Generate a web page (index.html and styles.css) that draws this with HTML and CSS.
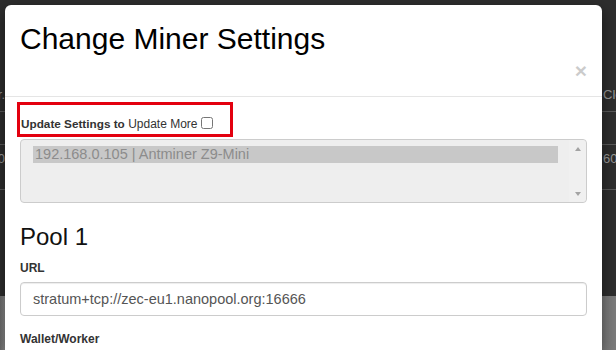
FILE: index.html
```html
<!DOCTYPE html>
<html lang="en">
<head>
    <meta charset="UTF-8">
    <meta name="viewport" content="width=device-width, initial-scale=1.0">
    <title>Change Miner Settings</title>
    <link rel="stylesheet" href="styles.css">
</head>
<body>
    <!-- the miners table behind the dialog -->
    <div class="page">
        <div class="page-row page-head">
            <span class="cell-left">Miner.</span>
            <span class="cell-right">Clear</span>
        </div>
        <div class="page-row page-line"></div>
        <div class="page-row page-data">
            <span class="cell-left">0</span>
            <span class="cell-right">60</span>
        </div>
        <div class="page-row page-rest"></div>
        <div class="page-foot"></div>
    </div>

    <div class="modal">
        <div class="modal-header">
            <h2 class="modal-title">Change Miner Settings</h2>
            <span class="close">&times;</span>
        </div>
        <div class="modal-body">
            <div class="highlight">
                <label class="update-label"><b>Update Settings to</b> <span class="update-more">Update More</span> <input type="checkbox" class="update-check"></label>
            </div>

            <div class="listbox">
                <div class="listbox-options">
                    <div class="listbox-option selected">192.168.0.105 | Antminer Z9-Mini</div>
                </div>
                <div class="listbox-scroll">
                    <span class="arrow-up"></span>
                    <span class="arrow-down"></span>
                </div>
            </div>

            <h3 class="pool-title">Pool 1</h3>
            <div class="form-group">
                <label class="field-label">URL</label>
                <input type="text" class="form-control" value="stratum+tcp://zec-eu1.nanopool.org:16666">
            </div>
            <div class="form-group">
                <label class="field-label">Wallet/Worker</label>
            </div>
        </div>
    </div>
</body>
</html>
```

FILE: styles.css
```css
body {
    font-family: "Liberation Sans", Arial, sans-serif;
    margin: 0;
    height: 350px;
    overflow: hidden;
    background-color: #2e2e2e;
    color: #333;
}
.page {
    display: flex;
    flex-direction: column;
    height: 350px;
}
.page-row {
    display: flex;
    justify-content: space-between;
    border-bottom: 1px solid #5a5a5a;
    color: #9a9a9a;
    font-size: 13px;
}
.page-head {
    height: 111px;
    align-items: flex-end;
}
.page-head span {
    margin-bottom: 9px;
}
.page-line {
    height: 32px;
}
.page-data {
    height: 44px;
    align-items: flex-start;
}
.page-data span {
    margin-top: 6px;
}
.page-rest {
    height: 106px;
    border-bottom: none;
}
.page-foot {
    flex: 1;
    background: linear-gradient(to right, #6c6c6c, #8a8a8a 4px, #7c7c7c);
}
.cell-left {
    width: 5px;
    display: flex;
    justify-content: flex-end;
    overflow: hidden;
    white-space: nowrap;
}
.cell-right {
    width: 13px;
    overflow: hidden;
    white-space: nowrap;
}
.modal {
    position: absolute;
    top: 5px;
    left: 5px;
    width: 597px;
    height: 345px;
    overflow: hidden;
    background-color: #fff;
    border-radius: 6px 6px 0 0;
    box-shadow: 0 5px 15px rgba(0,0,0,0.5);
}
.modal-header {
    display: flex;
    justify-content: space-between;
    height: 92px;
    box-sizing: border-box;
    padding: 17px 15px 0 15px;
    border-bottom: 1px solid #e5e5e5;
}
.modal-title {
    margin: 0;
    font-size: 30px;
    line-height: 34px;
    font-weight: normal;
    color: #000;
}
.close {
    margin-top: 38px;
    font-size: 21px;
    line-height: 21px;
    font-weight: bold;
    color: #000;
    opacity: 0.2;
}
.modal-body {
    padding: 5px 15px 0 15px;
}
.highlight {
    width: 216px;
    box-sizing: border-box;
    margin-left: -3px;
    padding: 11px 0 2px 1px;
    border: 3px solid #e3000f;
}
.update-label {
    display: block;
    line-height: 16px;
    font-size: 12px;
    white-space: nowrap;
}
.update-label b {
    font-size: 11.75px;
}
.update-check {
    width: 12px;
    height: 12px;
    margin: 0;
    vertical-align: -1px;
}
.listbox {
    display: flex;
    height: 64px;
    box-sizing: border-box;
    margin-top: 2px;
    border: 1px solid #ccc;
    border-radius: 4px;
    background-color: #eee;
}
.listbox-options {
    flex: 1;
    padding: 6px 0 0 12px;
    margin-right: 11px;
}
.listbox-option {
    height: 17px;
    line-height: 17px;
    padding-left: 2px;
    font-size: 14.5px;
    color: #8c8c8c;
    white-space: nowrap;
}
.listbox-option.selected {
    background-color: #c8c8c8;
}
.listbox-scroll {
    width: 17px;
    display: flex;
    flex-direction: column;
    justify-content: space-between;
    align-items: center;
    padding: 7px 0 6px 0;
    background-color: #f0f0f0;
    border-radius: 0 4px 4px 0;
}
.arrow-up {
    border-left: 3.5px solid transparent;
    border-right: 3.5px solid transparent;
    border-bottom: 4px solid #a3a3a3;
}
.arrow-down {
    border-left: 3.5px solid transparent;
    border-right: 3.5px solid transparent;
    border-top: 4px solid #a3a3a3;
}
.pool-title {
    margin: 21px 0 10px 0;
    font-size: 24px;
    line-height: 1.1;
    font-weight: normal;
    color: #111;
}
.form-group {
    margin-bottom: 15px;
}
.field-label {
    display: block;
    margin-bottom: 6px;
    font-size: 12px;
    line-height: 16px;
    font-weight: bold;
}
.form-control {
    display: block;
    width: 100%;
    height: 34px;
    box-sizing: border-box;
    padding: 6px 12px;
    font-family: "Liberation Sans", Arial, sans-serif;
    font-size: 14.5px;
    color: #555;
    border: 1px solid #ccc;
    border-radius: 4px;
    box-shadow: inset 0 1px 1px rgba(0,0,0,0.075);
}
```
